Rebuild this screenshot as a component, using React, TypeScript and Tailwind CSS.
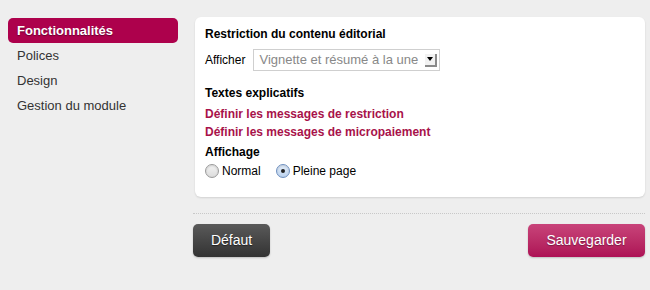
import { useState } from "react";

const menu = ["Fonctionnalités", "Polices", "Design", "Gestion du module"];

function Radio({ checked, label, onClick }: { checked: boolean; label: string; onClick: () => void }) {
    return (
        <label className="flex items-center gap-[3px] cursor-pointer" onClick={onClick}>
            <span
                className={
                    "flex items-center justify-center w-[14px] h-[14px] rounded-full border shadow-[inset_0_1px_2px_rgba(0,0,0,0.15)] " +
                    (checked
                        ? "border-[#6d8fbf] bg-gradient-to-b from-[#e4eefa] to-[#bcd3ef]"
                        : "border-[#9a9a9a] bg-gradient-to-b from-[#f4f4f4] to-[#dcdcdc]")
                }
            >
                {checked && <span className="w-[4px] h-[4px] rounded-full bg-[#222]" />}
            </span>
            <span>{label}</span>
        </label>
    );
}

export default function App() {
    const [mode, setMode] = useState("full");

    return (
        <div className="w-[650px] h-[290px] bg-[#eeeeee] font-['Liberation_Sans',Arial,sans-serif] text-[13px] text-[#222] flex">
            <ul className="w-[170px] ml-[8px] mt-[18px]">
                {menu.map((item, i) => (
                    <li
                        key={item}
                        className={
                            i === 0
                                ? "h-[25px] leading-[25px] px-[9px] rounded-[5px] bg-[#ad014c] text-white font-bold [text-shadow:0_1px_1px_rgba(0,0,0,0.4)]"
                                : "h-[25px] leading-[25px] px-[9px] text-[#333]"
                        }
                    >
                        {item}
                    </li>
                ))}
            </ul>

            <div className="ml-[15px] w-[452px] mt-[17px]">
                <div className="ml-[2px] h-[180px] bg-white rounded-[6px] shadow-[0_1px_2px_rgba(0,0,0,0.12)] px-[10px] pt-[9px]">
                    <h2 className="font-bold text-[12px] leading-[16px] text-black">Restriction du contenu éditorial</h2>
                    <div className="flex items-center mt-[7px] h-[22px]">
                        <span className="text-[12px] text-black">Afficher</span>
                        <div className="ml-[8px] w-[187px] h-[22px] border border-[#cfcfcf] flex items-center pl-[5px] pr-[2px]">
                            <span className="text-[13px] text-[#888] flex-1 whitespace-nowrap overflow-hidden">Vignette et résumé à la une</span>
                            <span className="w-[12px] h-[13px] bg-[#f2f2f2] border-r-2 border-b-2 border-[#8a8a8a] flex items-center justify-center">
                                <span className="w-0 h-0 border-l-[3px] border-r-[3px] border-t-[4px] border-l-transparent border-r-transparent border-t-black" />
                            </span>
                        </div>
                    </div>
                    <h3 className="font-bold text-[12px] leading-[16px] text-black mt-[14px]">Textes explicatifs</h3>
                    <div className="mt-[5px] flex flex-col gap-[2px] text-[12px] leading-[16px] font-bold text-[#a8124a]">
                        <a>Définir les messages de restriction</a>
                        <a>Définir les messages de micropaiement</a>
                    </div>
                    <h3 className="font-bold text-[12px] leading-[16px] text-black mt-[4px]">Affichage</h3>
                    <div className="flex items-center gap-[15px] mt-[2px] text-[12px] text-black">
                        <Radio checked={mode === "normal"} label="Normal" onClick={() => setMode("normal")} />
                        <Radio checked={mode === "full"} label="Pleine page" onClick={() => setMode("full")} />
                    </div>
                </div>

                <div className="mt-[16px] border-t border-dotted border-[#c8c8c8]" />

                <div className="mt-[10px] flex justify-between">
                    <button className="w-[77px] h-[33px] rounded-[5px] bg-gradient-to-b from-[#5a5a5a] to-[#333] text-white text-[14px] [text-shadow:0_1px_1px_rgba(0,0,0,0.5)] shadow-[0_1px_2px_rgba(0,0,0,0.2)]">
                        Défaut
                    </button>
                    <button className="w-[117px] h-[33px] rounded-[5px] bg-gradient-to-b from-[#c8437a] to-[#ad0f55] text-white text-[14px] [text-shadow:0_1px_1px_rgba(0,0,0,0.35)] shadow-[0_1px_2px_rgba(0,0,0,0.2)]">
                        Sauvegarder
                    </button>
                </div>
            </div>
        </div>
    );
}
